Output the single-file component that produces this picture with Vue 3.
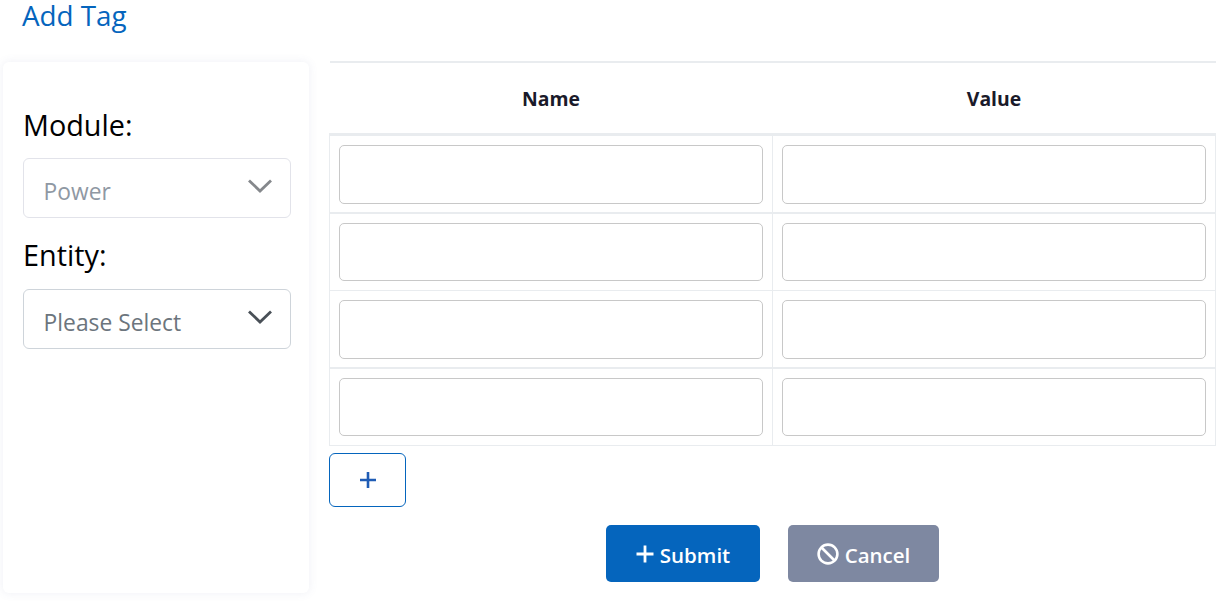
<script setup>
const rows = [1, 2, 3, 4]
</script>

<template>
  <div class="page">
    <h1 class="title">Add Tag</h1>
    <div class="content">
      <aside class="card">
        <label class="label first">Module:</label>
        <div class="select disabled">
          <span>Power</span>
          <svg width="26" height="16" viewBox="0 0 26 16"><path d="M2 2.5 L13 13 L24 2.5" fill="none" stroke="currentColor" stroke-width="2.8"/></svg>
        </div>
        <label class="label second">Entity:</label>
        <div class="select">
          <span>Please Select</span>
          <svg width="26" height="16" viewBox="0 0 26 16"><path d="M2 2.5 L13 13 L24 2.5" fill="none" stroke="currentColor" stroke-width="2.8"/></svg>
        </div>
      </aside>
      <main class="main">
        <table class="table">
          <thead>
            <tr><th>Name</th><th>Value</th></tr>
          </thead>
          <tbody>
            <tr v-for="r in rows" :key="r">
              <td><input class="input" type="text" /></td>
              <td><input class="input" type="text" /></td>
            </tr>
          </tbody>
        </table>
        <button class="add" type="button">
          <svg width="18" height="18" viewBox="0 0 18 18"><path d="M9 1V17M1 9H17" stroke="currentColor" stroke-width="2.6" fill="none"/></svg>
        </button>
        <div class="actions">
          <button class="btn submit" type="button">
            <svg width="18" height="18" viewBox="0 0 18 18"><path d="M9 0.5V17.5M0.5 9H17.5" stroke="currentColor" stroke-width="2.8" fill="none"/></svg>
            <span>Submit</span>
          </button>
          <button class="btn cancel" type="button">
            <svg width="22" height="22" viewBox="0 0 22 22"><circle cx="11" cy="11" r="9.4" fill="none" stroke="currentColor" stroke-width="2.6"/><path d="M4.5 4.5L17.5 17.5" stroke="currentColor" stroke-width="2.6"/></svg>
            <span>Cancel</span>
          </button>
        </div>
      </main>
    </div>
  </div>
</template>

<style>
html, body { margin: 0; background: #fff; }
</style>

<style scoped>
.page {
  width: 1223px;
  height: 603px;
  overflow: hidden;
  box-sizing: border-box;
  font-family: "Open Sans", "Noto Sans", sans-serif;
}
.title {
  margin: 0;
  padding-left: 22px;
  height: 62px;
  font-size: 27.8px;
  line-height: 31px;
  font-weight: 400;
  color: #0565bd;
}
.content {
  display: flex;
  align-items: flex-start;
  padding-left: 3px;
}
.card {
  width: 306px;
  height: 531px;
  box-sizing: border-box;
  padding: 0 18px 0 20px;
  background: #fff;
  border-radius: 6px;
  box-shadow: 0 0 10px rgba(90, 100, 160, 0.1);
  flex: none;
}
.label {
  display: block;
  font-size: 28.8px;
  line-height: 34px;
  color: #000;
}
.first { padding-top: 46px; padding-bottom: 16px; }
.second { padding-top: 20px; padding-bottom: 17px; }
.select {
  height: 60px;
  box-sizing: border-box;
  border: 1px solid #ced4da;
  border-radius: 6px;
  padding: 0 17px 0 20px;
  display: flex;
  align-items: center;
  justify-content: space-between;
  font-size: 22.8px;
  color: #6c757d;
}
.select span { position: relative; top: 3.2px; left: -0.4px; }
.select svg { color: #495057; position: relative; top: -2px; }
.select.disabled { color: #8f98a3; border-color: #e2e3ea; }
.select.disabled svg { color: #85888c; }
.main {
  margin-left: 21px;
  margin-top: -1px;
  width: 886px;
  flex: none;
}
.table {
  width: 887px;
  margin-left: -1px;
  border-collapse: collapse;
  table-layout: fixed;
}
thead tr { border-top: 2px solid #e9ecef; }
th {
  height: 70px;
  padding: 0;
  font-size: 19.4px;
  font-weight: 700;
  color: #1a1a2a;
  text-align: center;
  border-bottom: 3px solid #e9ecef;
}
td {
  padding: 9px;
  box-sizing: border-box;
  border: 1px solid #e9ecef;
}
tbody tr:nth-child(odd) td { border-bottom-width: 2px; padding-bottom: 8.5px; }
tbody tr:nth-child(even) td { padding-top: 8.5px; }
.input {
  display: block;
  width: 100%;
  height: 58.5px;
  box-sizing: border-box;
  border: 1px solid #c8c8c8;
  border-radius: 5px;
  background: #fff;
}
.add {
  display: flex;
  align-items: center;
  justify-content: center;
  width: 77px;
  height: 54px;
  margin: 7px 0 0 -1px;
  padding: 0;
  box-sizing: border-box;
  background: #fff;
  border: 1px solid #0565bd;
  border-radius: 6px;
  color: #1f5cb5;
}
.actions {
  display: flex;
  gap: 28px;
  margin: 18px 0 0 276px;
}
.btn {
  display: flex;
  align-items: center;
  justify-content: center;
  gap: 6px;
  height: 57px;
  padding: 0;
  border: none;
  border-radius: 5px;
  color: #fff;
  font-family: inherit;
  font-size: 20.5px;
  font-weight: 600;
}
.btn span { position: relative; top: 1px; }
.submit { width: 154px; background: #0565bd; }
.cancel { width: 151px; background: #7e88a1; }
</style>
